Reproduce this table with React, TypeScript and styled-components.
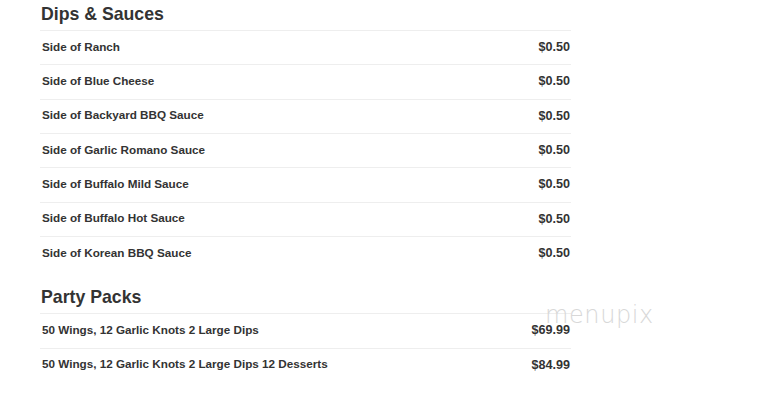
import React from "react";
import styled, { createGlobalStyle } from "styled-components";

const Global = createGlobalStyle`
  html, body { margin: 0; padding: 0; background: #fff; }
  body { font-family: "Liberation Sans", Arial, sans-serif; color: #333; }
`;

const Page = styled.div`
  position: relative;
  width: 776px;
  height: 399px;
  overflow: hidden;
  background: #fff;
`;

const Menu = styled.div`
  width: 531px;
  margin-left: 40px;
  display: flex;
  flex-direction: column;
`;

const Section = styled.section<{ $first?: boolean }>`
  display: flex;
  flex-direction: column;
  margin-top: ${(p) => (p.$first ? "0" : "13px")};
`;

const Heading = styled.h2`
  margin: 0;
  height: 30px;
  line-height: 28px;
  padding-left: 1px;
  font-size: 17.7px;
  font-weight: bold;
  color: #333;
`;

const Row = styled.div`
  box-sizing: border-box;
  height: 34.33px;
  border-top: 1px solid #eee;
  display: flex;
  align-items: center;
  justify-content: space-between;
  padding: 0 1px 2px 2px;
  font-size: 11.7px;
  font-weight: bold;
  line-height: 14px;
  color: #333;
`;

const Price = styled.span`
  font-size: 12.6px;
  font-weight: bold;
  margin-top: 1px;
`;

const Watermark = styled.div`
  position: absolute;
  left: 545px;
  top: 301px;
  font-family: "DejaVu Sans", sans-serif;
  font-weight: 200;
  font-size: 24px;
  letter-spacing: 0.6px;
  color: #d8d8d8;
`;

const sections = [
  {
    title: "Dips & Sauces",
    items: [
      ["Side of Ranch", "$0.50"],
      ["Side of Blue Cheese", "$0.50"],
      ["Side of Backyard BBQ Sauce", "$0.50"],
      ["Side of Garlic Romano Sauce", "$0.50"],
      ["Side of Buffalo Mild Sauce", "$0.50"],
      ["Side of Buffalo Hot Sauce", "$0.50"],
      ["Side of Korean BBQ Sauce", "$0.50"],
    ],
  },
  {
    title: "Party Packs",
    items: [
      ["50 Wings, 12 Garlic Knots 2 Large Dips", "$69.99"],
      ["50 Wings, 12 Garlic Knots 2 Large Dips 12 Desserts", "$84.99"],
    ],
  },
];

export default function App() {
  return (
    <Page>
      <Global />
      <Menu>
        {sections.map((s, i) => (
          <Section key={s.title} $first={i === 0}>
            <Heading>{s.title}</Heading>
            {s.items.map(([name, price]) => (
              <Row key={name}>
                <span>{name}</span>
                <Price>{price}</Price>
              </Row>
            ))}
          </Section>
        ))}
      </Menu>
      <Watermark>menupix</Watermark>
    </Page>
  );
}
